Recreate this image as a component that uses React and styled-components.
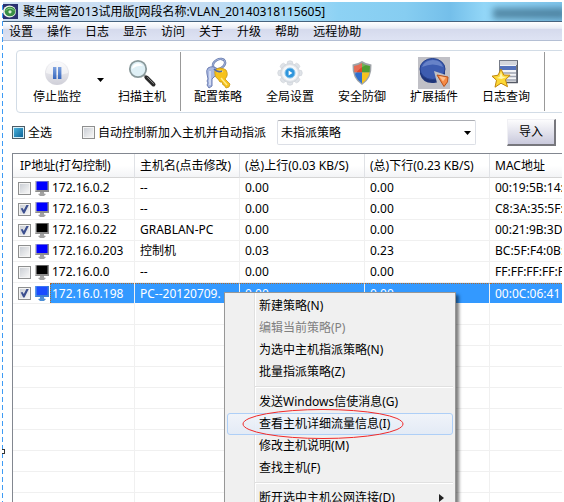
import { useState } from "react";
import styled, { createGlobalStyle } from "styled-components";

// ----------- Global styles -----------
const GlobalStyle = createGlobalStyle`
  * {
    box-sizing: border-box;
  }
  body {
    margin: 0;
    background: white;
    color: black;
    font-family: "Noto Sans", "Noto Sans CJK SC", sans-serif;
    font-size: 12px;
    line-height: 16px;
  }
  button, select, input {
    font: inherit;
    color: inherit;
    margin: 0;
  }
`;

// ----------- Window -----------
const PageStyled = styled.div`
  position: relative;
  display: flex;
  height: 100vh;
  overflow: hidden;
  padding: 2px 2px 0 0;
`;

const EdgeStyled = styled.div`
  position: relative;
  flex: none;
  width: 3px;
  background: repeating-linear-gradient(
      to bottom,
      white 0 3px,
      #3d9bf5 3px 8px
    )
    2px 0 / 1px 100% no-repeat;
`;

const HandleStyled = styled.span`
  position: absolute;
  left: 2px;
  top: 447px;
  width: 3px;
  height: 5px;
  background: white;
  border: 1px solid #333;
  border-left: none;
`;

const WindowStyled = styled.main`
  flex: 1;
  min-width: 0;
  overflow: hidden;
`;

const TitleBarStyled = styled.header`
  position: relative;
  display: flex;
  align-items: center;
  gap: 5px;
  height: 20px;
  overflow: hidden;
  border-bottom: 1px solid #46637e;
  background: linear-gradient(
    to right,
    #cfe0f2 0%,
    #c4dcf3 35%,
    #a9dcf6 52%,
    #8dd2f4 60%,
    #86cdf1 72%,
    #74bfea 80%,
    #92d6f7 86%,
    #7fc4ea 100%
  );
`;

const TitleStyled = styled.h1`
  margin: 0;
  font-size: 12px;
  font-weight: normal;
  white-space: nowrap;
`;

const SmudgeStyled = styled.span`
  position: absolute;
  right: -4px;
  top: 6px;
  width: 73px;
  height: 11px;
  background: #3d6d89;
  opacity: 0.7;
  filter: blur(3px);
`;

const MenuBarStyled = styled.nav`
  display: flex;
  align-items: center;
  gap: 14px;
  height: 19px;
  padding: 2px 0 0 6px;
  border-bottom: 1px solid #b4bfd4;
  background: linear-gradient(#ffffff 0%, #e9edf6 35%, #d5daed 40%, #dee3f3 100%);
`;

const MenuLinkStyled = styled.a`
  color: black;
  text-decoration: none;
  white-space: nowrap;
`;

// ----------- Toolbar -----------
const ToolbarStyled = styled.div`
  display: flex;
  height: 63px;
  margin: 9px -12px 0 13px;
  padding-left: 4px;
  border: 1px solid #d2dce6;
  border-radius: 4px;
`;

const ToolButtonStyled = styled.button`
  display: flex;
  flex: none;
  flex-direction: column;
  align-items: center;
  width: 72px;
  padding: 6px 0 0;
  border: none;
  background: none;
  white-space: nowrap;
`;

const ToolIconStyled = styled.svg`
  width: 32px;
  height: 32px;
  flex: none;
`;

const DropButtonStyled = styled.button`
  display: flex;
  flex: none;
  justify-content: flex-end;
  width: 13px;
  padding: 27px 2px 0 0;
  border: none;
  background: none;
`;

const DividerStyled = styled.span`
  flex: none;
  width: 1px;
  margin: 1px 1px 1px 2px;
  background: #999;
`;

// ----------- Filter row -----------
const FilterRowStyled = styled.div`
  display: flex;
  align-items: center;
  height: 27px;
  margin: 6px 0 7px;
  padding: 0 6px 0 9px;
  white-space: nowrap;
`;

const CheckLabelStyled = styled.label`
  display: flex;
  align-items: center;
  gap: 3px;
  margin-right: ${(props) => props.$space};
`;

const CheckboxStyled = styled.input`
  appearance: none;
  display: block;
  flex: none;
  width: 13px;
  height: 13px;
  padding: 1px;
  border: 1px solid #8e8f8f;
  background: linear-gradient(135deg, #cbcfd5, #f6f6f6) content-box, #f4f4f4;

  &:checked::before {
    content: "";
    display: block;
    width: 9px;
    height: 9px;
    background: #3c4f8f;
    clip-path: polygon(8% 45%, 28% 38%, 42% 62%, 74% 0, 100% 0, 50% 100%, 36% 100%);
  }

  ${(props) =>
    props.$partial
      ? "border-color: #4d5c66; background: linear-gradient(135deg, #49b2dc, #0c6499) content-box, #d8f0fa;"
      : ""}
`;

const SelectBoxStyled = styled.div`
  position: relative;
  flex: 1;
  height: 25px;
`;

const SelectStyled = styled.select`
  appearance: none;
  width: 100%;
  height: 25px;
  padding: 0 20px 0 3px;
  border: 1px solid #dcdfe6;
  border-top-color: #abadb3;
  border-radius: 2px;
  background: white;
  outline: none;
`;

const SelectArrowStyled = styled.svg`
  position: absolute;
  right: 5px;
  top: 11px;
  pointer-events: none;
`;

const ImportButtonStyled = styled.button`
  flex: none;
  width: 49px;
  height: 27px;
  margin-left: 31px;
  padding: 0;
  border: 1px solid #f0f0f4;
  border-right: 2px solid #77777d;
  border-bottom: 2px solid #77777d;
  background: linear-gradient(#fcfcfd, #c9c9dc);
`;

// ----------- Host table -----------
const ListStyled = styled.div`
  margin-left: 9px;
  border-left: 1px solid #828790;
  border-top: 1px solid #828790;
  overflow: hidden;
`;

const TableStyled = styled.table`
  width: 100%;
  table-layout: fixed;
  border-collapse: separate;
  border-spacing: 0;
`;

const ColStyled = styled.col`
  width: ${(props) => props.$width};
`;

const HeadCellStyled = styled.th`
  height: 24px;
  padding: 0 0 0 5px;
  border-right: 1px solid #e0e2e6;
  border-bottom: 1px solid #d5d5d5;
  background: linear-gradient(white 50%, #f3f4f6);
  font-weight: normal;
  text-align: left;
  white-space: nowrap;

  &:first-child {
    padding-left: 7px;
  }

  &:last-child {
    border-right: none;
  }
`;

const CellStyled = styled.td`
  height: 21px;
  padding: 0 0 0 5px;
  border-right: 1px solid #f0f0f0;
  border-bottom: 1px solid #f0f0f0;
  overflow: hidden;
  white-space: nowrap;
  ${(props) =>
    props.$selected
      ? "background: #3399ff; color: white; border-top: 1px dotted #b06a2c; border-bottom-color: white;"
      : ""}

  &:last-child {
    border-right: none;
  }
`;

const IpCellStyled = styled(CellStyled)`
  padding-left: 5px;
  background: white;
  border-top: none;
`;

const HostStyled = styled.div`
  display: flex;
  align-items: center;
  height: 20px;
`;

const PcIconStyled = styled.svg`
  flex: none;
  margin: 0 1px 0 4px;
`;

const IpStyled = styled.span`
  flex: 1;
  height: 20px;
  padding-left: 2px;
  line-height: 20px;
  ${(props) =>
    props.$selected
      ? "background: #3399ff; color: white; border: 1px dotted #b06a2c; border-width: 1px 0 0 1px; padding-left: 1px;"
      : ""}
`;

// ----------- Context menu -----------
const ContextMenuStyled = styled.div`
  position: absolute;
  left: 224px;
  top: 292px;
  width: 232px;
  padding: 2px;
  border: 1px solid #979797;
  background: linear-gradient(to right, #e0e0e0 50%, white 50%) 29px 0 / 2px 100%
    no-repeat #f0f0f0;
  box-shadow: 3px 3px 3px rgba(0, 0, 0, 0.5);
`;

const MenuItemStyled = styled.button`
  display: flex;
  align-items: center;
  justify-content: space-between;
  width: 100%;
  height: 22px;
  padding: 0 8px 0 31px;
  border: 1px solid transparent;
  border-radius: 3px;
  background: none;
  white-space: nowrap;

  &:disabled {
    color: #808080;
  }

  ${(props) =>
    props.$active
      ? "border-color: #aecff7; background: linear-gradient(rgba(240, 244, 250, 0.9), rgba(226, 234, 246, 0.9));"
      : ""}
`;

const MenuLineStyled = styled.hr`
  height: 2px;
  margin: 3px 0 3px 28px;
  border: none;
  border-top: 1px solid #e0e0e0;
  border-bottom: 1px solid white;
`;

const MarkStyled = styled.svg`
  position: absolute;
  left: 17px;
  top: 115px;
  pointer-events: none;
`;

// ------------ Data ------------------
const menus = ["设置", "操作", "日志", "显示", "访问", "关于", "升级", "帮助", "远程协助"];

const columns = [
  { title: "IP地址(打勾控制)", width: "122px" },
  { title: "主机名(点击修改)", width: "105px" },
  { title: "(总)上行(0.03 KB/S)", width: "125px" },
  { title: "(总)下行(0.23 KB/S)", width: "125px" },
  { title: "MAC地址", width: "auto" },
];

const hosts = [
  { ip: "172.16.0.2", name: "--", up: "0.00", down: "0.00", mac: "00:19:5B:14:", screen: "#0000ff" },
  { ip: "172.16.0.3", name: "--", up: "0.00", down: "0.00", mac: "C8:3A:35:5F:", screen: "#0000ff", checked: true },
  { ip: "172.16.0.22", name: "GRABLAN-PC", up: "0.00", down: "0.00", mac: "00:21:9B:3D", screen: "#000000", checked: true },
  { ip: "172.16.0.203", name: "控制机", up: "0.03", down: "0.23", mac: "BC:5F:F4:0B:", screen: "#0000ff" },
  { ip: "172.16.0.0", name: "--", up: "0.00", down: "0.00", mac: "FF:FF:FF:FF:F", screen: "#000000" },
  { ip: "172.16.0.198", name: "PC--20120709.", up: "0.00", down: "0.00", mac: "00:0C:06:41", screen: "#1a4cff", checked: true, selected: true },
];

const emptyRows = Array.from({ length: 10 }, (_, i) => i);

const menuItems = [
  { text: "新建策略(N)" },
  { text: "编辑当前策略(P)", disabled: true },
  { text: "为选中主机指派策略(N)" },
  { text: "批量指派策略(Z)" },
  { line: true },
  { text: "发送Windows信使消息(G)" },
  { text: "查看主机详细流量信息(I)", active: true },
  { text: "修改主机说明(M)" },
  { text: "查找主机(F)" },
  { line: true },
  { text: "断开选中主机公网连接(D)", sub: true },
];

// ------------ Icons ------------------
const AppIcon = () => (
  <svg width="15" height="15" viewBox="0 0 15 15">
    <rect width="15" height="15" fill="#2a3170" />
    <ellipse cx="6.5" cy="7.5" rx="6.5" ry="6" fill="#f2f7ee" />
    <ellipse cx="7" cy="7.5" rx="5.4" ry="4.8" fill="#3a8f45" />
    <path d="M3 6.5a4.6 4.6 0 0 1 8 0" stroke="#8fd08a" strokeWidth="1" fill="none" />
    <circle cx="7" cy="7.8" r="1.6" fill="#d8efd4" />
  </svg>
);

const PauseIcon = () => (
  <ToolIconStyled viewBox="0 0 32 32">
    <defs>
      <linearGradient id="pauseDisc" x1="0" y1="0" x2="0" y2="1">
        <stop offset="0" stopColor="#f6f6f8" />
        <stop offset="1" stopColor="#cfcfd8" />
      </linearGradient>
      <linearGradient id="pauseBar" x1="0" y1="0" x2="0" y2="1">
        <stop offset="0" stopColor="#7fa3e0" />
        <stop offset="1" stopColor="#3767bd" />
      </linearGradient>
    </defs>
    <circle cx="16" cy="16" r="12" fill="url(#pauseDisc)" />
    <path d="M5 16a11 11 0 0 1 22 0q-11 4-22 0z" fill="#fff" opacity=".5" />
    <rect x="12" y="10" width="3.4" height="12" fill="url(#pauseBar)" />
    <rect x="17" y="10" width="3.4" height="12" fill="url(#pauseBar)" />
  </ToolIconStyled>
);

const SearchIcon = () => (
  <ToolIconStyled viewBox="0 0 32 32">
    <path d="M18 18l4 4" stroke="#999" strokeWidth="2.5" />
    <path d="M20.500 20.500l7 7" stroke="#2b2b2b" strokeWidth="4" strokeLinecap="round" />
    <path d="M21.500 20.500l6 6" stroke="#888" strokeWidth="1" strokeLinecap="round" />
    <circle cx="12" cy="12" r="8.2" fill="#dff0f6" stroke="#8a9a9c" strokeWidth="1.8" />
    <path d="M6 12a6 6 0 0 1 11-3q-6-1-11 3z" fill="#fff" />
  </ToolIconStyled>
);

const KeysIcon = () => (
  <ToolIconStyled viewBox="0 0 32 32">
    <ellipse cx="17" cy="7" rx="6.5" ry="4.6" fill="none" stroke="#6479ad" strokeWidth="2.4" transform="rotate(-28 17 7)" />
    <ellipse cx="17" cy="7" rx="6.5" ry="4.6" fill="none" stroke="#b9c6e6" strokeWidth="0.8" transform="rotate(-28 17 7)" />
    <path d="M6 11q5-3 9 1l2 4-5 4-2 2v7l-3 2-2-3 1-2-1-2 1-2-1-5q-1-4 1-6z" fill="#a9b8e0" stroke="#6b7db3" />
    <path d="M8 14v14" stroke="#e2e9fb" strokeWidth="1.4" />
    <path d="M13 13q5-4 11 0 3 5-1 9l5 5-1 3-3 1-2-3-1 0-1-3-2 0-2-3q-4-2-3-9z" fill="#f7c21a" stroke="#c7960f" strokeWidth=".8" />
    <path d="M15 15q3-2 6 0M19 21l6 7" stroke="#ffeb8a" strokeWidth="1.5" fill="none" />
    <path d="M12 12q4 4 8 2" stroke="#5469a0" strokeWidth="1.6" fill="none" />
  </ToolIconStyled>
);

const GearIcon = () => (
  <ToolIconStyled viewBox="0 0 32 32">
    <g fill="#dfe3e8" stroke="#c9ced5" strokeWidth=".6">
      {[0, 45, 90, 135, 180, 225, 270, 315].map((angle) => (
        <path key={angle} d="M13 8l.6-3.500q2.400-1.600 4.800 0L19 8z" transform={`rotate(${angle} 16 16)`} />
      ))}
      <circle cx="16" cy="16" r="9.4" />
    </g>
    <circle cx="16" cy="16" r="7.8" fill="#f5f7f9" />
    <circle cx="16" cy="16" r="5" fill="#2d95dc" stroke="#83c3ec" />
    <path d="M14.6 13.6v4.8l3.800-2.4z" fill="#fff" />
  </ToolIconStyled>
);

const ShieldIcon = () => (
  <ToolIconStyled viewBox="0 0 32 32">
    <defs>
      <clipPath id="shieldShape">
        <path d="M16 6q3.500 2.500 8 3 .5 12-8 17.500-8.500-5.500-8-17.500 4.500-.5 8-3z" />
      </clipPath>
    </defs>
    <path d="M16 4q4.500 3 9.500 3.500.8 14-9.500 20.500-10.300-6.500-9.500-20.500 5-.5 9.500-3.500z" fill="#9fa4a8" />
    <g clipPath="url(#shieldShape)">
      <rect x="5" y="3" width="11" height="12.500" fill="#e0492b" />
      <rect x="16" y="3" width="11" height="12.500" fill="#4f9e32" />
      <rect x="5" y="15.500" width="11" height="14" fill="#2f6fcd" />
      <rect x="16" y="15.500" width="11" height="14" fill="#f6c31e" />
      <path d="M6 3h20v4q-12 1-18 12z" fill="#fff" opacity=".2" />
    </g>
  </ToolIconStyled>
);

const PieIcon = () => (
  <ToolIconStyled viewBox="0 0 32 32">
    <rect width="32" height="32" fill="#c0c0c6" />
    <path d="M2 12v5q3 10 14 9 9-1 11-8v-6z" fill="#1f3579" />
    <ellipse cx="14.500" cy="12" rx="12.500" ry="10.500" fill="#3d5cb0" stroke="#24408c" />
    <path d="M4 10q3-7 11-7 8 0 10 7-10-5-21 0z" fill="#8ba2dc" opacity=".55" />
    <path d="M16 14l12 4v9l-9-1z" fill="#c0c0c6" />
    <path d="M19 18l11 2q1 5-4 9.500z" fill="#f58a45" stroke="#b8521a" />
    <path d="M21 19l7 1.500-3 4z" fill="#ffbe8a" />
  </ToolIconStyled>
);

const LogIcon = () => (
  <ToolIconStyled viewBox="0 0 32 32">
    <rect x="9.500" y="3.500" width="18" height="22" fill="#f3f4f7" stroke="#777c88" />
    <path d="M27 4v21.500H14" fill="none" stroke="#555a66" strokeWidth="1.600" />
    <rect x="10" y="4" width="17" height="4" fill="#d4d6dc" />
    <rect x="10" y="9" width="16" height="4" fill="#5572ba" />
    <path d="M10 16h16M10 19.500h16M10 23h16" stroke="#9fa4b2" strokeWidth="1.400" />
    <path d="M11 12l2.800 6 6.200.2-4.500 4.500 2 7-6.500-3.500-6 4 1.500-7-4.500-4 6-1z" fill="#fdd835" stroke="#c0850c" strokeLinejoin="round" />
    <path d="M11 15l1.500 4.500 4 .5-5 2-5-1 3-1z" fill="#fff6b0" />
  </ToolIconStyled>
);

const PcIcon = ({ screen, selected }) => (
  <PcIconStyled width="14" height="15" viewBox="0 0 14 15">
    <path d="M0 0h14v11H0z" fill={selected ? "#5a9be6" : "#c4c4c4"} />
    <path d="M14 0v11H0l2-2h10V0z" fill={selected ? "#3b7fd4" : "#8e8e8e"} />
    <rect x="1.500" y="0.500" width="11" height="8.500" fill={screen} />
    <path d="M5 11h4v1.500H5zM3 13q4-1.500 8 0l-2 2H5z" fill={selected ? "#4d8fd6" : "#a2a2a2"} />
  </PcIconStyled>
);

const tools = [
  { text: "配置策略", Icon: KeysIcon },
  { text: "全局设置", Icon: GearIcon },
  { text: "安全防御", Icon: ShieldIcon },
  { text: "扩展插件", Icon: PieIcon },
  { text: "日志查询", Icon: LogIcon },
];

const ToolButton = ({ text, Icon }) => (
  <ToolButtonStyled type="button">
    <Icon />
    {text}
  </ToolButtonStyled>
);

// ------------ HostRow Component ------------------
const HostRow = ({ host }) => {
  const [checked, setChecked] = useState(Boolean(host.checked));

  return (
    <tr>
      <IpCellStyled>
        <HostStyled>
          <CheckboxStyled
            type="checkbox"
            aria-label={host.ip}
            checked={checked}
            onChange={(e) => setChecked(e.target.checked)}
          />
          <PcIcon screen={host.screen} selected={host.selected} />
          <IpStyled $selected={host.selected}>{host.ip}</IpStyled>
        </HostStyled>
      </IpCellStyled>
      <CellStyled $selected={host.selected}>{host.name}</CellStyled>
      <CellStyled $selected={host.selected}>{host.up}</CellStyled>
      <CellStyled $selected={host.selected}>{host.down}</CellStyled>
      <CellStyled $selected={host.selected}>{host.mac}</CellStyled>
    </tr>
  );
};

// ------------ ContextMenu Component ------------------
const ContextMenu = () => (
  <ContextMenuStyled>
    {menuItems.map((item, i) =>
      item.line ? (
        <MenuLineStyled key={i} />
      ) : (
        <MenuItemStyled
          key={i}
          type="button"
          disabled={item.disabled}
          $active={item.active}
        >
          {item.text}
          {item.sub && (
            <svg width="5" height="8" viewBox="0 0 5 8">
              <path d="M0 0l5 4-5 4z" fill="#222" />
            </svg>
          )}
        </MenuItemStyled>
      )
    )}
    <MarkStyled width="162" height="32" viewBox="0 0 162 32">
      <ellipse cx="81" cy="16" rx="80" ry="14.500" fill="none" stroke="#f02a2a" />
    </MarkStyled>
  </ContextMenuStyled>
);

// ------------ App Component ------------------
const App = () => {
  const [all, setAll] = useState(false);
  const [auto, setAuto] = useState(false);

  return (
    <PageStyled>
      <GlobalStyle />
      <EdgeStyled>
        <HandleStyled />
      </EdgeStyled>
      <WindowStyled>
        <TitleBarStyled>
          <AppIcon />
          <TitleStyled>聚生网管2013试用版[网段名称:VLAN_20140318115605]</TitleStyled>
          <SmudgeStyled />
        </TitleBarStyled>
        <MenuBarStyled>
          {menus.map((menu) => (
            <MenuLinkStyled key={menu} href="#">
              {menu}
            </MenuLinkStyled>
          ))}
        </MenuBarStyled>

        <ToolbarStyled>
          <ToolButton text="停止监控" Icon={PauseIcon} />
          <DropButtonStyled type="button" aria-label="停止监控">
            <svg width="7" height="4" viewBox="0 0 7 4">
              <path d="M0 0h7L3.500 4z" />
            </svg>
          </DropButtonStyled>
          <ToolButton text="扫描主机" Icon={SearchIcon} />
          <DividerStyled />
          {tools.map((tool) => (
            <ToolButton key={tool.text} text={tool.text} Icon={tool.Icon} />
          ))}
          <DividerStyled />
        </ToolbarStyled>

        <FilterRowStyled>
          <CheckLabelStyled $space="30px">
            <CheckboxStyled
              type="checkbox"
              $partial={!all}
              checked={all}
              onChange={(e) => setAll(e.target.checked)}
            />
            全选
          </CheckLabelStyled>
          <CheckLabelStyled $space="11px">
            <CheckboxStyled
              type="checkbox"
              checked={auto}
              onChange={(e) => setAuto(e.target.checked)}
            />
            自动控制新加入主机并自动指派
          </CheckLabelStyled>
          <SelectBoxStyled>
            <SelectStyled aria-label="自动指派">
              <option>未指派策略</option>
            </SelectStyled>
            <SelectArrowStyled width="7" height="4" viewBox="0 0 7 4">
              <path d="M0 0h7L3.500 4z" />
            </SelectArrowStyled>
          </SelectBoxStyled>
          <ImportButtonStyled type="button">导入</ImportButtonStyled>
        </FilterRowStyled>

        <ListStyled>
          <TableStyled>
            <colgroup>
              {columns.map((column) => (
                <ColStyled key={column.title} $width={column.width} />
              ))}
            </colgroup>
            <thead>
              <tr>
                {columns.map((column) => (
                  <HeadCellStyled key={column.title}>{column.title}</HeadCellStyled>
                ))}
              </tr>
            </thead>
            <tbody>
              {hosts.map((host) => (
                <HostRow key={host.ip} host={host} />
              ))}
              {emptyRows.map((row) => (
                <tr key={row}>
                  {columns.map((column) => (
                    <CellStyled key={column.title} />
                  ))}
                </tr>
              ))}
            </tbody>
          </TableStyled>
        </ListStyled>
      </WindowStyled>
      <ContextMenu />
    </PageStyled>
  );
};

export default App;
